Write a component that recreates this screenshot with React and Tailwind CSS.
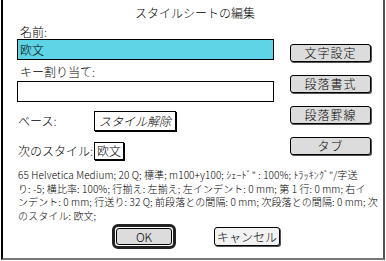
import React from 'react';

const jp = { fontFamily: '"Noto Sans CJK JP", "Noto Sans", sans-serif' };

const SideButton = ({ label }) => (
  <div className="w-[81px] h-[18px] rounded-[3px] border border-black bg-[#dcdcdc] shadow-[1px_1px_0_#555] flex items-center justify-center text-[12px] leading-none text-black tracking-[1px]">
    {label}
  </div>
);

const descLines = [
  '65 Helvetica Medium; 20 Q; 標準; m100+y100; ｼｪｰﾄﾞ" : 100%; ﾄﾗｯｷﾝｸﾞ"/字送',
  'り: -5; 横比率: 100%; 行揃え: 左揃え; 左インデント: 0 mm; 第 1 行: 0 mm; 右イ',
  'ンデント: 0 mm; 行送り: 32 Q; 前段落との間隔: 0 mm; 次段落との間隔: 0 mm; 次',
  'のスタイル: 欧文;'
];

export default function App() {
  return (
    <div className="w-[386px] h-[261px] bg-white overflow-hidden font-light text-black" style={jp}>
      <div className="ml-[1px] w-[384px] h-[260px] border-l-2 border-black border-r-2 border-r-[#555] border-b-2 border-b-[#777] flex flex-col">
        {/* Title */}
        <div className="h-[14px] mt-[6px] text-center text-[12px] leading-[14px] pl-[4px]">
          スタイルシートの編集
        </div>

        {/* Main */}
        <div className="flex">
          <div className="ml-[14px] w-[257px] flex flex-col">
            <div className="mt-[5px] h-[14px] text-[12px] leading-[14px] pl-[3px]">名前:</div>
            <div className="h-[21px] border border-black bg-[#5fd4e6] text-[12px] leading-[19px] pl-[2px]">
              欧文
            </div>
            <div className="mt-[5px] h-[14px] text-[12px] leading-[14px] pl-[3px]">キー割り当て:</div>
            <div className="mt-[2px] h-[21px] border border-black bg-white" />

            <div className="mt-[9px] flex items-center h-[20px]">
              <div className="w-[77px] text-[12px] leading-none pl-[1px]">ベース:</div>
              <div className="h-[20px] px-[4px] border border-black bg-white shadow-[1px_1px_0_#000] flex items-center text-[12px] italic leading-none">
                スタイル解除
              </div>
            </div>

            <div className="mt-[11px] flex items-center h-[18px]">
              <div className="w-[77px] text-[12px] leading-none pl-[1px]">次のスタイル:</div>
              <div className="h-[18px] px-[2px] border border-black bg-white shadow-[1px_1px_0_#000] flex items-center text-[12px] leading-none">
                欧文
              </div>
            </div>
          </div>

          <div className="ml-[16px] mt-[24px] flex flex-col gap-[13px]">
            <SideButton label="文字設定" />
            <SideButton label="段落書式" />
            <SideButton label="段落罫線" />
            <SideButton label="タブ" />
          </div>
        </div>

        {/* Description */}
        <div className="mt-[8px] ml-[15px] text-[10px] leading-[13.5px] tracking-[0.1px]">
          {descLines.map((line, i) => (
            <div key={i} className="whitespace-nowrap h-[13.5px]">{line}</div>
          ))}
        </div>

        {/* Buttons */}
        <div className="mt-[2px] flex items-center">
          <div className="ml-[109px] w-[64px] h-[25px] rounded-[6px] border-[3px] border-[#222] p-[1px]">
            <div className="w-full h-full rounded-[3px] border border-black bg-[#dcdcdc] flex items-center justify-center text-[12px] leading-none">
              OK
            </div>
          </div>
          <div className="ml-[38px] w-[66px] h-[19px] rounded-[3px] border border-black bg-[#f2f2f2] shadow-[1px_1px_0_#555] flex items-center justify-center text-[12px] leading-none">
            キャンセル
          </div>
        </div>
      </div>
    </div>
  );
}
